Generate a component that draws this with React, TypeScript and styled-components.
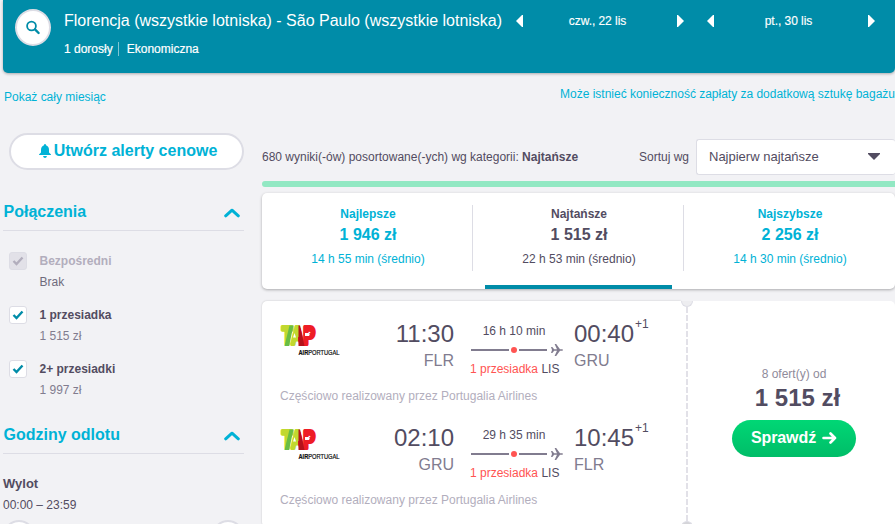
import React, { useState } from 'react'
import styled, { createGlobalStyle } from 'styled-components'

// css
const GlobalStyle = createGlobalStyle`
  * { box-sizing: border-box; }
  body {
    margin: 0;
    overflow: hidden;
    background: #f2f2f5;
    color: #524c61;
    font: 12px/16px "Liberation Sans", Arial, sans-serif;
  }
  button { font-family: inherit; cursor: pointer; }
  svg { display: block; flex: none; }
`
const Page = styled.div`width: 895px; height: 524px; overflow: hidden;`

const Header = styled.header`
  display: flex;
  height: 73px;
  margin-left: 3px;
  padding: 9px 0 0 12px;
  border-radius: 0 0 5px 5px;
  background: #008ca8;
  box-shadow: 0 1px 3px rgba(0, 0, 0, 0.3);
  color: #fff;
`
const SearchButton = styled.button`
  display: flex;
  flex: none;
  align-items: center;
  justify-content: center;
  width: 36px;
  height: 37px;
  padding: 0;
  border: 2px solid #dddde5;
  border-radius: 50%;
  background: #fff;
`
const Trip = styled.div`width: 465px; flex: none; padding-left: 13px;`
const TripTitle = styled.div`padding-top: 1px; font-size: 16px; line-height: 22px; letter-spacing: -0.005px; white-space: nowrap;`
const TripMeta = styled.div`
  display: flex;
  margin-top: 10px;
  line-height: 14px;
  -webkit-text-stroke: 0.2px #fff;
  span + span { margin-left: 5px; padding-left: 8px; border-left: 1px solid #7fc5d3; }
`
const DateNav = styled.div`
  display: flex;
  flex: none;
  align-items: center;
  justify-content: space-between;
  width: 168px;
  height: 24px;
  margin-right: 23px;
  -webkit-text-stroke: 0.15px #fff;
  span { margin-right: 5px; letter-spacing: -0.05px; }
`

const Notices = styled.div`
  display: flex;
  justify-content: space-between;
  height: 60px;
  padding: 13px 0 0 4px;
  white-space: nowrap;
`
const NoticeLink = styled.a<{ $top?: number }>`
  padding-top: ${({ $top = 0 }) => $top}px;
  color: #00b2d6;
  letter-spacing: -0.01px;
`

const Columns = styled.div`display: flex;`
const Sider = styled.aside`width: 241px; margin: 0 18px 0 3px; flex: none;`
const AlertButton = styled.button`
  display: flex;
  align-items: center;
  justify-content: center;
  gap: 3px;
  width: 235px;
  height: 37px;
  margin-left: 6px;
  padding: 0 0 1px 3px;
  border: 2px solid #dddde5;
  border-radius: 19px;
  background: #fff;
  color: #00b2d6;
  font-size: 16px;
  font-weight: bold;
`
const FilterHead = styled.div<{ $top: number }>`
  display: flex;
  justify-content: space-between;
  height: 30px;
  margin-top: ${({ $top }) => $top}px;
  padding: 1px 4px 0 0.5px;
  border-bottom: 1px solid #dddde5;
  color: #00b2d6;
  font-size: 16px;
  font-weight: bold;
  line-height: 20px;
  svg { margin-top: 6px; }
`
const Checks = styled.div`padding: 21px 0 0 6px;`
const CheckRow = styled.div<{ $off?: boolean }>`
  display: flex;
  gap: 12px;
  height: 54px;
  color: ${({ $off }) => ($off ? '#b2aebd' : '#524c61')};
`
const CheckBox = styled.button<{ $off?: boolean }>`
  display: flex;
  align-items: center;
  justify-content: center;
  width: 18px;
  height: 18px;
  padding: 0;
  border: 1px solid #dddde5;
  border-radius: 3px;
  background: ${({ $off }) => ($off ? '#e2e1e8' : '#fff')};
`
const CheckText = styled.div<{ $off?: boolean }>`
  padding: 1px 0 0 0.5px;
  div { margin-top: 5px; color: ${({ $off }) => ($off ? '#6f6b7c' : '#817c8f')}; }
`
const TimeRange = styled.div`
  padding-top: 21px;
  strong { display: block; font-size: 13px; line-height: 18px; }
  div { margin-top: 4px; }
`
const Handles = styled.span`
  display: flex;
  justify-content: space-between;
  margin-top: 7px;
  i { width: 32px; height: 32px; border: 2px solid #dddde5; border-radius: 50%; background: #fff; }
`

const Main = styled.main`width: 633px; flex: none; white-space: nowrap;`
const SortRow = styled.div`
  display: flex;
  align-items: center;
  height: 48px;
  > span { margin-left: auto; margin-right: 7px; }
`
const Select = styled.div`
  display: flex;
  align-items: center;
  justify-content: space-between;
  width: 199px;
  height: 36px;
  padding: 0 15px 1px 12px;
  border: 1px solid #dddde5;
  border-right: 0;
  border-radius: 3px;
  background: #fff;
  font-size: 13px;
`
const Progress = styled.div`height: 6px; border-radius: 3px 0 0 3px; background: #92e8c3;`
const Tabs = styled.div`
  display: flex;
  height: 96px;
  margin-top: 6px;
  border-radius: 5px;
  background: #fff;
  box-shadow: 0 1px 3px rgba(0, 0, 0, 0.3);
`
const TabBody = styled.div`
  width: 100%;
  height: 66px;
  padding: 1px 0 0 2px;
  border-right: 1px solid #dddde5;
  text-align: center;
  strong { display: block; }
  big { display: block; margin: 3px 0 6px; font-size: 16px; line-height: 20px; font-weight: bold; }
`
const Tab = styled.div<{ $active?: boolean }>`
  display: flex;
  flex: 1;
  flex-direction: column;
  align-items: center;
  padding-top: 12px;
  color: ${({ $active }) => ($active ? '#524c61' : '#00b2d6')};
  cursor: pointer;
  &:last-child ${TabBody} { border-color: transparent; }
  &::after {
    content: '';
    width: 187px;
    height: 4px;
    margin-top: 14px;
    background: ${({ $active }) => ($active ? '#008ca8' : 'transparent')};
  }
`

const Ticket = styled.section`display: flex; height: 226px; margin-top: 12px;`
const Legs = styled.div`
  width: 419px;
  padding: 18px 0 0 18px;
  border-radius: 5px 0 0 5px;
  background: #fff;
  box-shadow: 0 0 2px rgba(0, 0, 0, 0.2);
`
const Perforation = styled.div`
  display: flex;
  flex-direction: column;
  justify-content: space-between;
  align-items: center;
  width: 12px;
  overflow: hidden;
  background: repeating-linear-gradient(#e2e1e8 0 6px, #fff 6px 8px) center 6px / 2px 214px no-repeat, #fff;
`
const Notch = styled.i<{ $bottom?: boolean }>`
  width: 12px;
  height: 6px;
  border: 1px solid #dddde5;
  border-width: ${({ $bottom }) => ($bottom ? '1px 1px 0' : '0 1px 1px')};
  border-radius: ${({ $bottom }) => ($bottom ? '6px 6px 0 0' : '0 0 6px 6px')};
  background: ${({ $bottom }) => ($bottom ? '#d5d5d9' : '#ededf0')};
`
const Leg = styled.div`height: 104px;`
const LegRow = styled.div`display: flex; height: 68px;`
const LogoCell = styled.div`width: 62px;`
const Stop = styled.div<{ $end?: boolean }>`
  width: ${({ $end }) => ($end ? 90 : 112)}px;
  text-align: ${({ $end }) => ($end ? 'left' : 'right')};
  color: #817c8f;
  font-size: 16px;
  line-height: 20px;
`
const Clock = styled.div`
  display: flex;
  height: 32px;
  color: #524c61;
  font-size: 24px;
  line-height: 30px;
  sup { margin-left: 1px; font-size: 12px; line-height: 10px; }
`
const TimeOf = styled.span<{ $end?: boolean }>`flex: ${({ $end }) => ($end ? 'none' : 1)};`
const Route = styled.div`
  width: 120px;
  padding: 4px 0 0 16px;
  svg { margin: 4px 0 4px 1px; }
  em { color: #ff5452; font-style: normal; }
`
const Duration = styled.div`width: 88px; text-align: center;`
const Operator = styled.div`color: #b2aebd; line-height: 18px; letter-spacing: 0.01px;`
const Offer = styled.div`
  display: flex;
  flex: 1;
  flex-direction: column;
  align-items: center;
  padding: 65px 0 0 0;
  border-radius: 0 5px 5px 0;
  background: #fff;
  color: #8f8b9b;
`
const Price = styled.strong`margin: 0 -7px 6px 0; color: #524c61; font-size: 24px; line-height: 32px;`
const GoButton = styled.button`
  display: flex;
  align-items: center;
  justify-content: center;
  gap: 6px;
  width: 124px;
  height: 37px;
  padding: 0 0 2px;
  border: 0;
  border-radius: 19px;
  background: linear-gradient(#00d775, #00bd68);
  color: #fff;
  font-size: 16px;
  font-weight: bold;
  letter-spacing: -0.1px;
`

// data
const stops = [
  { name: 'Bezpośredni', price: 'Brak', off: true },
  { name: '1 przesiadka', price: '1 515 zł' },
  { name: '2+ przesiadki', price: '1 997 zł' },
]
const tabs = [
  { name: 'Najlepsze', price: '1 946 zł', time: '14 h 55 min (średnio)' },
  { name: 'Najtańsze', price: '1 515 zł', time: '22 h 53 min (średnio)' },
  { name: 'Najszybsze', price: '2 256 zł', time: '14 h 30 min (średnio)' },
]
const legs = [
  { from: 'FLR', to: 'GRU', start: '11:30', end: '00:40', duration: '16 h 10 min' },
  { from: 'GRU', to: 'FLR', start: '02:10', end: '10:45', duration: '29 h 35 min' },
]

// icons
const Arrow: React.FC<{ right?: boolean }> = ({ right }) => (
  <svg width="7" height="12" viewBox="0 0 7 12" fill="#fff">
    <path d={right ? 'M0 0H1L7 6L1 12H0Z' : 'M7 0H6L0 6L6 12H7Z'} />
  </svg>
)

const Chevron = () => (
  <svg width="16" height="10" viewBox="0 0 16 10" fill="none" stroke="#00b2d6" strokeWidth="3" strokeLinecap="round" strokeLinejoin="round">
    <path d="M1.7 7.8L8 2.2L14.3 7.8" />
  </svg>
)

const RouteLine = () => (
  <svg width="92" height="14" viewBox="0 0 92 14">
    <path d="M0 7H38M48 7H76" stroke="#817c8f" strokeWidth="2" />
    <circle cx="43" cy="7" r="3" fill="#ff5452" />
    <path d="M80 4H81.3L83.2 6.2H86L83.6 1H85.2L89 6.2H91Q92 6.4 92 7Q92 7.6 91 7.8H89L85.2 13H83.6L86 7.8H83.2L81.3 10H80L81 7Z" fill="#817c8f" />
  </svg>
)

const TapLogo = () => (
  <svg width="62" height="41" viewBox="0 -6 62 41" fontFamily="Liberation Sans, Arial, sans-serif" fontWeight="bold">
    <defs>
      <linearGradient id="tap" gradientUnits="userSpaceOnUse" x1="0" y1="9" x2="36" y2="17">
        <stop offset="0.51" stopColor="#c1d82f" />
        <stop offset="0.51" stopColor="#ee1c25" />
      </linearGradient>
    </defs>
    <text x="2" y="19" fontSize="24" textLength="33" lengthAdjust="spacingAndGlyphs" fill="url(#tap)" stroke="url(#tap)" strokeWidth="4" strokeLinejoin="round">TAP</text>
    {/* folds between the coloured bands */}
    <path d="M9.500 0.500H13.500L9 21H4.500Z" fill="#68bd45" />
    <path d="M18.500 0.500H20L24.500 21H18.500Z" fill="#b5121b" />
    <path d="M14.500 8L16 12.500H13Z" fill="#fff" />
    <path d="M25 8H29Q30.500 9.500 29 11H25Z" fill="#fff" />
    <text x="18.500" y="30" fontSize="6.500" textLength="41" lengthAdjust="spacingAndGlyphs" fill="#111" stroke="#111" strokeWidth="0.2">
      AIR<tspan fontWeight="normal">PORTUGAL</tspan>
    </text>
  </svg>
)

// template
const App: React.FC = () => {
  const [active, setActive] = useState(1)
  const [checked, setChecked] = useState([true, true, true])
  const toggle = (index: number) => {
    setChecked(checked.map((value, i) => (i === index ? !value : value)))
  }

  return (
    <Page>
      <GlobalStyle />
      <Header>
        <SearchButton>
          <svg width="16" height="16" viewBox="0 0 16 16" fill="none" stroke="#008ca8">
            <circle cx="6.5" cy="6" r="4.4" strokeWidth="1.8" />
            <path d="M10 9.4L13.6 13" strokeWidth="2.4" strokeLinecap="round" />
          </svg>
        </SearchButton>
        <Trip>
          <TripTitle>Florencja (wszystkie lotniska) - São Paulo (wszystkie lotniska)</TripTitle>
          <TripMeta><span>1 dorosły</span><span>Ekonomiczna</span></TripMeta>
        </Trip>
        <DateNav><Arrow /><span>czw., 22 lis</span><Arrow right /></DateNav>
        <DateNav><Arrow /><span>pt., 30 lis</span><Arrow right /></DateNav>
      </Header>
      <Notices>
        <NoticeLink $top={3}>Pokaż cały miesiąc</NoticeLink>
        <NoticeLink>Może istnieć konieczność zapłaty za dodatkową sztukę bagażu</NoticeLink>
      </Notices>
      <Columns>
        <Sider>
          <AlertButton>
            <svg width="12" height="14" viewBox="0 0 12 14" fill="#00b2d6">
              <path d="M6 0Q7 0 7 1.2Q10 2.2 10 6V8.5L12 10.5V11H0V10.5L2 8.5V6Q2 2.2 5 1.2Q5 0 6 0ZM4 12H8Q7.5 14 6 14Q4.5 14 4 12Z" />
            </svg>
            Utwórz alerty cenowe
          </AlertButton>
          <FilterHead $top={31}>Połączenia<Chevron /></FilterHead>
          <Checks>
            {stops.map(({ name, price, off }, index) => (
              <CheckRow key={name} $off={off}>
                <CheckBox $off={off} disabled={off} onClick={() => toggle(index)}>
                  {checked[index] && (
                    <svg width="12" height="10" viewBox="0 0 12 10" fill="none" stroke={off ? '#b2aebd' : '#008ca8'} strokeWidth="2.4">
                      <path d="M1.5 5L4.5 8L10.5 1.5" />
                    </svg>
                  )}
                </CheckBox>
                <CheckText $off={off}><strong>{name}</strong><div>{price}</div></CheckText>
              </CheckRow>
            ))}
          </Checks>
          <FilterHead $top={10}>Godziny odlotu<Chevron /></FilterHead>
          <TimeRange>
            <strong>Wylot</strong>
            <div>00:00 – 23:59</div>
            <Handles><i /><i /></Handles>
          </TimeRange>
        </Sider>
        <Main>
          <SortRow>
            680 wyniki(-ów) posortowane(-ych) wg kategorii:&nbsp;<strong>Najtańsze</strong>
            <span>Sortuj wg</span>
            <Select>
              Najpierw najtańsze
              <svg width="12" height="7" viewBox="0 0 12 7" fill="#524c61"><path d="M0 0H12V1L6 7L0 1Z" /></svg>
            </Select>
          </SortRow>
          <Progress />
          <Tabs>
            {tabs.map(({ name, price, time }, index) => (
              <Tab key={name} $active={index === active} onClick={() => setActive(index)}>
                <TabBody><strong>{name}</strong><big>{price}</big>{time}</TabBody>
              </Tab>
            ))}
          </Tabs>
          <Ticket>
            <Legs>
              {legs.map(({ from, to, start, end, duration }) => (
                <Leg key={start}>
                  <LegRow>
                    <LogoCell><TapLogo /></LogoCell>
                    <Stop><Clock><TimeOf>{start}</TimeOf></Clock>{from}</Stop>
                    <Route>
                      <Duration>{duration}</Duration>
                      <RouteLine />
                      <em>1 przesiadka</em> LIS
                    </Route>
                    <Stop $end><Clock><TimeOf $end>{end}</TimeOf><sup>+1</sup></Clock>{to}</Stop>
                  </LegRow>
                  <Operator>Częściowo realizowany przez Portugalia Airlines</Operator>
                </Leg>
              ))}
            </Legs>
            <Perforation><Notch /><Notch $bottom /></Perforation>
            <Offer>
              8 ofert(y) od
              <Price>1 515 zł</Price>
              <GoButton>
                Sprawdź
                <svg width="15" height="12" viewBox="0 0 15 12" fill="none" stroke="#fff" strokeWidth="2.6" strokeLinecap="round" strokeLinejoin="round">
                  <path d="M1.5 6H13M8.5 1.5L13 6L8.5 10.5" />
                </svg>
              </GoButton>
            </Offer>
          </Ticket>
        </Main>
      </Columns>
    </Page>
  )
}

export default App
